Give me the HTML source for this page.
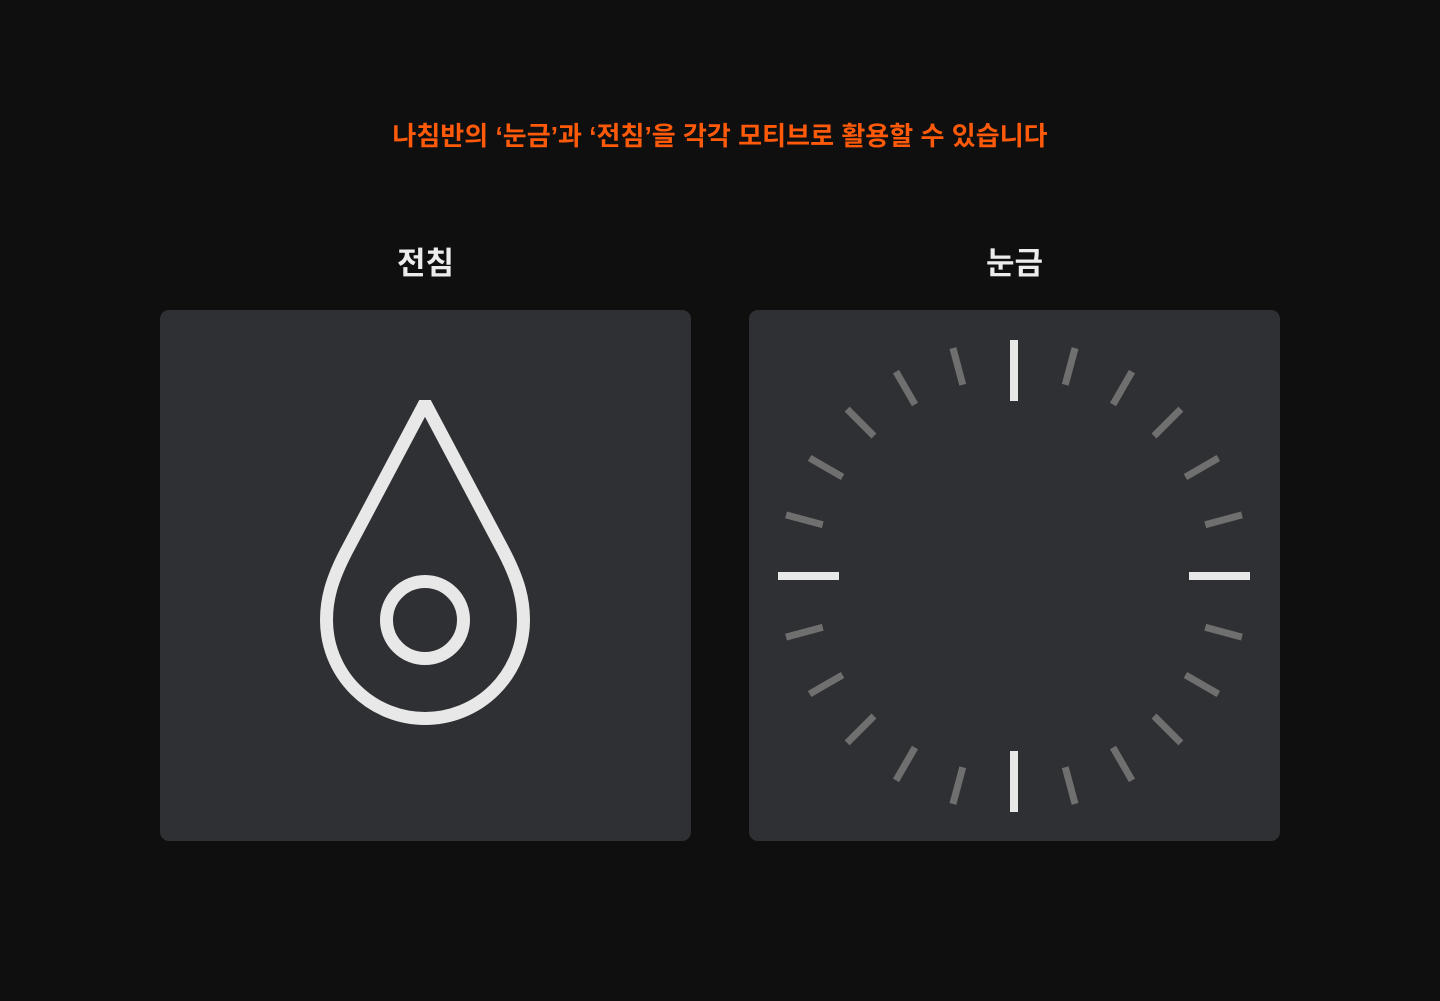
<!DOCTYPE html>
<html><head><meta charset="utf-8"><style>
html,body{margin:0;padding:0;background:#0f0f0f;width:1440px;height:1001px;overflow:hidden;font-family:"Liberation Sans","Noto Sans CJK KR",sans-serif}
.t{position:absolute;top:116px;left:0;width:1440px;text-align:center;color:#ff5a0a;font-size:26px;font-weight:700;letter-spacing:0.05px}
.l{position:absolute;top:238px;width:531px;text-align:center;color:#ececec;font-size:31px;font-weight:700}
.c{position:absolute;top:310px;width:531px;height:531px;background:#2f3033;border-radius:9px}
</style></head><body>
<div class="t">나침반의 ‘눈금’과 ‘전침’을 각각 모티브로 활용할 수 있습니다</div>
<div class="l" style="left:160px">전침</div>
<div class="l" style="left:749px">눈금</div>
<div class="c" style="left:160px"></div>
<div class="c" style="left:749px"></div>
<svg width="1440" height="1001" style="position:absolute;left:0;top:0">
<path d="M425,403 L346,552 C331,581 326.5,600 326.5,620 A98.5,98.5 0 0 0 523.5,620 C523.5,600 519,581 504,552 Z" fill="none" stroke="#e8e8e8" stroke-width="13" stroke-linejoin="bevel"/>
<circle cx="425" cy="620" r="38.5" fill="none" stroke="#e8e8e8" stroke-width="13"/>
<g id="ticks"></g>
</svg>
<script>
var g=document.getElementById('ticks'),s='';
for(var i=0;i<24;i++){var a=i*15*Math.PI/180,maj=i%6==0,r1=maj?175:198,r2=236;
var sx=Math.sin(a),cy=-Math.cos(a);
s+='<line x1="'+(1014+r1*sx)+'" y1="'+(576+r1*cy)+'" x2="'+(1014+r2*sx)+'" y2="'+(576+r2*cy)+'" stroke="'+(maj?'#e8e8e8':'#6f6f6f')+'" stroke-width="'+(maj?8:7)+'"/>';}
g.innerHTML=s;
</script>
</body></html>
